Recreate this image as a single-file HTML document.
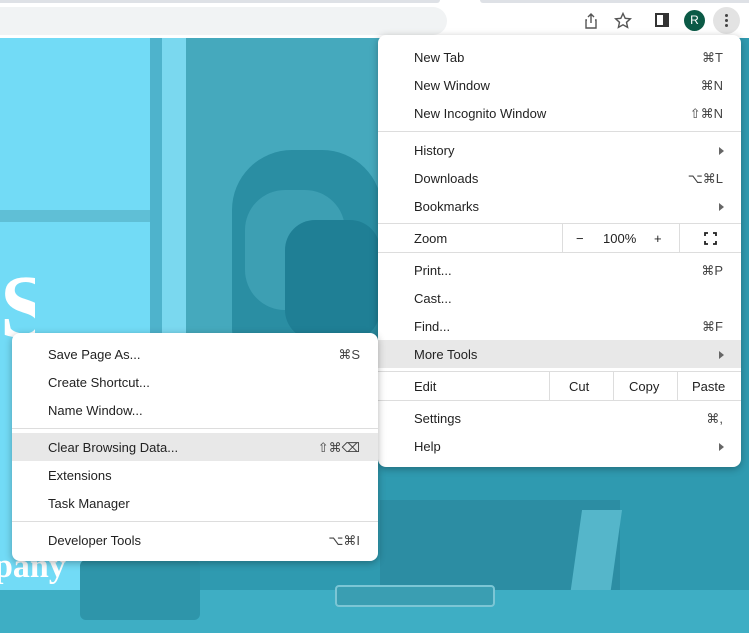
<!DOCTYPE html>
<html><head><meta charset="utf-8"><style>
*{margin:0;padding:0;box-sizing:border-box}
body{width:749px;height:633px;overflow:hidden;position:relative;font-family:"Liberation Sans",sans-serif;font-size:13px;color:#222;background:#fff}
.a{position:absolute}
.menu{position:absolute;background:#fff;border-radius:8px;box-shadow:0 2px 8px rgba(0,0,0,.3)}
.it{position:absolute;left:0;right:0;height:28px;line-height:30px}
.it .l{position:absolute}
.it .r{position:absolute;color:#444}
.sep{position:absolute;left:0;right:0;height:1px;background:#ddd}
.tri{position:absolute;width:0;height:0;border-top:4px solid transparent;border-bottom:4px solid transparent;border-left:5px solid #666;top:11px}
.vl{position:absolute;width:1px;background:#ddd}
</style></head><body>
<div class="a" style="left:0;top:38px;width:749px;height:595px;background:#2f9ab0"></div>
<div class="a" style="left:0;top:38px;width:165px;height:595px;background:#72dbf6"></div>
<div class="a" style="left:0;top:210px;width:165px;height:12px;background:#5fbfd6"></div>
<div class="a" style="left:150px;top:38px;width:12px;height:300px;background:#4eb3cc"></div>
<div class="a" style="left:162px;top:38px;width:24px;height:595px;background:#7ad8ef"></div>
<div class="a" style="left:186px;top:38px;width:200px;height:300px;background:#45a9bd"></div>
<div class="a" style="left:232px;top:150px;width:150px;height:200px;background:#2a8ea3;border-radius:60px 60px 20px 20px"></div>
<div class="a" style="left:245px;top:190px;width:100px;height:120px;background:#3d9fb3;border-radius:40px"></div>
<div class="a" style="left:285px;top:220px;width:95px;height:120px;background:#1f7f95;border-radius:30px"></div>
<div class="a" style="left:380px;top:500px;width:240px;height:133px;background:#2c8da3"></div>
<div class="a" style="left:575px;top:510px;width:40px;height:100px;background:#55b6ca;transform:skewX(-8deg)"></div>
<div class="a" style="left:0;top:590px;width:749px;height:43px;background:#3eaec4"></div>
<div class="a" style="left:335px;top:585px;width:160px;height:22px;background:#3a9eb2;border:2px solid #7cc6d5;border-radius:4px"></div>
<div class="a" style="left:80px;top:560px;width:120px;height:60px;background:#2e95aa;border-radius:6px"></div>
<div class="a" style="left:0;top:268px;width:35px;height:80px;color:#fff;font:bold 90px 'Liberation Serif',serif;line-height:80px;overflow:hidden">S</div>
<div class="a" style="left:-6px;top:548px;color:#fff;font:bold 34px 'Liberation Serif',serif">pany</div>
<div class="a" style="left:0;top:0;width:749px;height:38px;background:#fff"></div>
<div class="a" style="left:0;top:0;width:440px;height:3px;background:#dee1e6;border-radius:0 0 6px 0"></div>
<div class="a" style="left:480px;top:0;width:269px;height:3px;background:#dee1e6;border-radius:0 0 0 6px"></div>
<div class="a" style="left:0;top:7px;width:447px;height:28px;background:#f1f3f4;border-radius:0 14px 14px 0"></div>
<svg class="a" style="left:583px;top:12px" width="16" height="18" viewBox="0 0 16 18"><path d="M8 2v9M5 5l3-3 3 3M4 8H3v8h10V8h-1" fill="none" stroke="#555" stroke-width="1.4"/></svg>
<svg class="a" style="left:614px;top:12px" width="18" height="18" viewBox="0 0 18 18"><path d="M9 1.5l2.2 4.8 5.2.5-3.9 3.5 1.1 5.1L9 12.8l-4.6 2.6 1.1-5.1L1.6 6.8l5.2-.5z" fill="none" stroke="#555" stroke-width="1.4"/></svg>
<div class="a" style="left:655px;top:13px;width:14px;height:14px;border:2px solid #333;border-right:6px solid #333"></div>
<div class="a" style="left:684px;top:10px;width:21px;height:21px;border-radius:50%;background:#0b5a46;color:#fff;font-size:12px;text-align:center;line-height:21px">R</div>
<div class="a" style="left:713px;top:7px;width:27px;height:27px;border-radius:50%;background:#e3e3e3"></div>
<div class="a" style="left:725px;top:14px;width:3px;height:3px;border-radius:50%;background:#444;box-shadow:0 5px 0 #444,0 10px 0 #444"></div>

<div class="menu" style="left:378px;top:35px;width:363px;height:432px">
 <div class="it" style="top:8px"><span class="l" style="left:36px">New Tab</span><span class="r" style="right:18px">⌘T</span></div>
 <div class="it" style="top:36px"><span class="l" style="left:36px">New Window</span><span class="r" style="right:18px">⌘N</span></div>
 <div class="it" style="top:64px"><span class="l" style="left:36px">New Incognito Window</span><span class="r" style="right:18px">⇧⌘N</span></div>
 <div class="sep" style="top:96px"></div>
 <div class="it" style="top:101px"><span class="l" style="left:36px">History</span><span class="tri" style="right:17px"></span></div>
 <div class="it" style="top:129px"><span class="l" style="left:36px">Downloads</span><span class="r" style="right:18px">⌥⌘L</span></div>
 <div class="it" style="top:157px"><span class="l" style="left:36px">Bookmarks</span><span class="tri" style="right:17px"></span></div>
 <div class="sep" style="top:188px"></div>
 <div class="it" style="top:189px"><span class="l" style="left:36px">Zoom</span><span class="l" style="left:198px">−</span><span class="l" style="left:225px">100%</span><span class="l" style="left:276px">+</span></div>
 <div class="vl" style="left:184px;top:189px;height:28px"></div>
 <div class="vl" style="left:301px;top:189px;height:28px"></div>
 <svg class="a" style="left:326px;top:197px" width="13" height="13" viewBox="0 0 13 13"><path d="M1 4V1h3M9 1h3v3M12 9v3H9M4 12H1V9" fill="none" stroke="#222" stroke-width="1.8"/></svg>
 <div class="sep" style="top:217px"></div>
 <div class="it" style="top:221px"><span class="l" style="left:36px">Print...</span><span class="r" style="right:18px">⌘P</span></div>
 <div class="it" style="top:249px"><span class="l" style="left:36px">Cast...</span></div>
 <div class="it" style="top:277px"><span class="l" style="left:36px">Find...</span><span class="r" style="right:18px">⌘F</span></div>
 <div class="it" style="top:305px;background:#e8e8e8"><span class="l" style="left:36px">More Tools</span><span class="tri" style="right:17px"></span></div>
 <div class="sep" style="top:336px"></div>
 <div class="it" style="top:337px"><span class="l" style="left:36px">Edit</span><span class="l" style="left:191px">Cut</span><span class="l" style="left:251px">Copy</span><span class="l" style="left:314px">Paste</span></div>
 <div class="vl" style="left:171px;top:337px;height:28px"></div>
 <div class="vl" style="left:235px;top:337px;height:28px"></div>
 <div class="vl" style="left:299px;top:337px;height:28px"></div>
 <div class="sep" style="top:365px"></div>
 <div class="it" style="top:369px"><span class="l" style="left:36px">Settings</span><span class="r" style="right:18px">⌘,</span></div>
 <div class="it" style="top:397px"><span class="l" style="left:36px">Help</span><span class="tri" style="right:17px"></span></div>
</div>

<div class="menu" style="left:12px;top:333px;width:366px;height:228px">
 <div class="it" style="top:7px"><span class="l" style="left:36px">Save Page As...</span><span class="r" style="right:18px">⌘S</span></div>
 <div class="it" style="top:35px"><span class="l" style="left:36px">Create Shortcut...</span></div>
 <div class="it" style="top:63px"><span class="l" style="left:36px">Name Window...</span></div>
 <div class="sep" style="top:95px"></div>
 <div class="it" style="top:100px;background:#e8e8e8"><span class="l" style="left:36px">Clear Browsing Data...</span><span class="r" style="right:18px">⇧⌘⌫</span></div>
 <div class="it" style="top:128px"><span class="l" style="left:36px">Extensions</span></div>
 <div class="it" style="top:156px"><span class="l" style="left:36px">Task Manager</span></div>
 <div class="sep" style="top:188px"></div>
 <div class="it" style="top:193px"><span class="l" style="left:36px">Developer Tools</span><span class="r" style="right:18px">⌥⌘I</span></div>
</div>
</body></html>
